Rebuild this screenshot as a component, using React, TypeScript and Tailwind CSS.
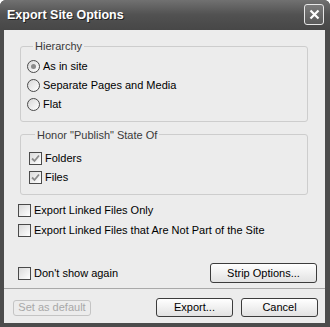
import type { ReactNode } from 'react'

const font = { fontFamily: '"Liberation Sans", Arial, sans-serif' }

function Radio({ label, checked = false }: { label: string; checked?: boolean }) {
  return (
    <label className="flex h-[19px] items-center gap-[3px]">
      <span className="flex h-[13px] w-[13px] items-center justify-center rounded-full border border-[#4a4a4a] bg-gradient-to-br from-[#d8d8d8] to-white">
        {checked && <span className="h-[5px] w-[5px] rounded-full bg-[#8a8a8a]" />}
      </span>
      <span>{label}</span>
    </label>
  )
}

function Check({ label, checked = false }: { label: string; checked?: boolean }) {
  return (
    <label className="flex h-[19px] items-center gap-[3px]">
      <span className="flex h-[13px] w-[13px] items-center justify-center border border-[#4a4a4a] bg-gradient-to-br from-[#dadada] to-white">
        {checked && (
          <svg width="9" height="9" viewBox="0 0 9 9">
            <path d="M1 4.5 L3.5 7 L8 1.5" fill="none" stroke="#8c8c8c" strokeWidth="1.8" />
          </svg>
        )}
      </span>
      <span>{label}</span>
    </label>
  )
}

function Group({ title, children, className = '' }: { title: string; children: ReactNode; className?: string }) {
  return (
    <fieldset className={`rounded-[3px] border border-[#cdcdcd] ${className}`}>
      <legend className="ml-[6px] px-[2px] text-[#3a3a3a]">{title}</legend>
      {children}
    </fieldset>
  )
}

function Button({ children, className = '', disabled = false }: { children: ReactNode; className?: string; disabled?: boolean }) {
  return (
    <button
      className={`flex items-center justify-center rounded-[3px] border ${
        disabled
          ? 'border-[#c4c4c4] bg-[#ececec] text-[#a8a8a8]'
          : 'border-[#3c3c3c] bg-gradient-to-b from-white to-[#e2e2e2] text-black'
      } ${className}`}
    >
      {children}
    </button>
  )
}

export default function App() {
  return (
    <div className="flex h-[327px] w-[330px] flex-col rounded-t-[6px] bg-[#4c4c4c] text-[11px] text-black" style={font}>
      <div className="flex h-[30px] items-center justify-between rounded-t-[6px] bg-gradient-to-b from-[#717171] via-[#515151] to-[#474747] pl-[7px] pr-[6px]">
        <span className="text-[12.5px] font-bold text-white [text-shadow:1px_1px_0_#222]">Export Site Options</span>
        <span className="mt-[-1px] flex h-[21px] w-[20px] items-center justify-center rounded-[3px] border border-[#e6e6e6] bg-gradient-to-b from-[#7a7a7a] to-[#5a5a5a]">
          <svg width="11" height="11" viewBox="0 0 11 11">
            <path d="M1.5 1.5 L9.5 9.5 M9.5 1.5 L1.5 9.5" stroke="white" strokeWidth="2.2" />
          </svg>
        </span>
      </div>

      <div className="mx-[4px] mb-[4px] mr-[5px] flex flex-1 flex-col bg-[#ececec]">
        <div className="pl-[16px] pr-[17px] pt-[8px]">
          <Group title="Hierarchy" className="pb-[7px] pl-[6px] pt-[2px]">
            <Radio label="As in site" checked />
            <Radio label="Separate Pages and Media" />
            <Radio label="Flat" />
          </Group>
          <Group title={'Honor "Publish" State Of'} className="mt-[5px] pb-[7px] pl-[8px] pt-[6px]">
            <Check label="Folders" checked />
            <Check label="Files" checked />
          </Group>
        </div>

        <div className="mt-[6px] pl-[14px]">
          <Check label="Export Linked Files Only" />
          <div className="mt-[1px]">
            <Check label="Export Linked Files that Are Not Part of the Site" />
          </div>
        </div>

        <div className="mt-[23px] flex items-center justify-between pl-[14px] pr-[8px]">
          <Check label="Don't show again" />
          <Button className="h-[20px] w-[107px]">Strip Options...</Button>
        </div>

        <div className="mt-[5px] border-t border-[#a9a9a9]" />

        <div className="mt-[9px] flex items-center pl-[9px] pr-[7px]">
          <Button disabled className="h-[16px] w-[78px]">Set as default</Button>
          <div className="ml-auto flex gap-[8px]">
            <Button className="h-[19px] w-[77px]">Export...</Button>
            <Button className="h-[19px] w-[77px]">Cancel</Button>
          </div>
        </div>
      </div>
    </div>
  )
}
